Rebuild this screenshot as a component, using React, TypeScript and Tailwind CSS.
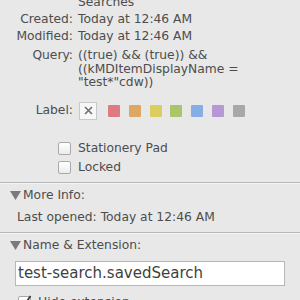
import React from 'react';

const swatches = ['#df7b80', '#dea764', '#dccd5f', '#a8c76b', '#87aee4', '#b898d4', '#a8a8a8'];

function Checkbox({ checked = false }: { checked?: boolean }) {
  return (
    <div className="relative w-[13px] h-[13px] rounded-[2px] border border-[#a9a9a9] bg-gradient-to-b from-white to-[#ececec] shrink-0">
      {checked && (
        <svg className="absolute -left-[1px] -top-[3px]" width="15" height="15" viewBox="0 0 15 15">
          <path d="M3 8 L6 11.5 L12.5 2" fill="none" stroke="#3d3d3d" strokeWidth="1.8" />
        </svg>
      )}
    </div>
  );
}

function Triangle() {
  return (
    <svg width="11" height="9" viewBox="0 0 11 9" className="shrink-0">
      <path d="M0 0 H11 L5.5 9 Z" fill="#7a7a7a" />
    </svg>
  );
}

function Row({ label, children }: { label: string; children: React.ReactNode }) {
  return (
    <div className="flex h-[17px] items-center">
      <div className="w-[73px] text-right">{label}</div>
      <div className="ml-[5px]">{children}</div>
    </div>
  );
}

export default function App() {
  return (
    <div
      className="w-[300px] h-[300px] overflow-hidden bg-[#e8e8e8] text-[#4d4d4d] text-[12.3px] leading-[17px]"
      style={{ fontFamily: '"DejaVu Sans", "Noto Sans", sans-serif' }}
    >
      <div className="mt-[-6px] flex h-[17px] items-center pl-[78px]">Searches</div>
      <Row label="Created:">Today at 12:46 AM</Row>
      <Row label="Modified:">Today at 12:46 AM</Row>
      <div className="mt-[4px] flex leading-[13.5px]">
        <div className="w-[73px] text-right">Query:</div>
        <div className="ml-[5px]">
          <div>((true) &amp;&amp; (true)) &amp;&amp;</div>
          <div>((kMDItemDisplayName =</div>
          <div>"test*"cdw))</div>
        </div>
      </div>
      <div className="mt-[12.5px] flex h-[17px] items-center">
        <div className="w-[73px] text-right">Label:</div>
        <div className="ml-[6px] flex items-center">
          <div className="flex w-[18px] h-[18px] items-center justify-center border border-[#c9c9c9] bg-[#f7f7f7]">
            <svg width="9" height="9" viewBox="0 0 9 9">
              <path d="M1 1 L8 8 M8 1 L1 8" stroke="#6f6f6f" strokeWidth="1.6" />
            </svg>
          </div>
          <div className="ml-[11px] flex gap-[8.8px]">
            {swatches.map((c) => (
              <div key={c} className="w-[12px] h-[12px] rounded-[1px]" style={{ backgroundColor: c }} />
            ))}
          </div>
        </div>
      </div>
      <div className="mt-[20px] flex h-[18px] items-center pl-[58px] gap-[7px]">
        <Checkbox />
        <span>Stationery Pad</span>
      </div>
      <div className="mt-[1px] flex h-[18px] items-center pl-[58px] gap-[7px]">
        <Checkbox />
        <span>Locked</span>
      </div>
      <div className="mt-[6px] h-[1px] bg-[#b8b8b8]" />
      <div className="h-[1px] bg-[#f4f4f4]" />
      <div className="mt-[3px] flex h-[17px] items-center pl-[10px] gap-[2px]">
        <Triangle />
        <span>More Info:</span>
      </div>
      <div className="mt-[5px] h-[17px] pl-[17px]">Last opened: Today at 12:46 AM</div>
      <div className="mt-[6px] h-[1px] bg-[#b8b8b8]" />
      <div className="h-[1px] bg-[#f4f4f4]" />
      <div className="mt-[3px] flex h-[17px] items-center pl-[10px] gap-[2px]">
        <Triangle />
        <span>Name &amp; Extension:</span>
      </div>
      <div className="mx-[15px] mt-[7px] flex h-[25px] items-center border border-[#b7b7b7] bg-white px-[2px] text-[15px] text-[#3f3f3f]">
        test-search.savedSearch
      </div>
      <div className="mt-[7px] flex h-[18px] items-center pl-[18px] gap-[7px]">
        <Checkbox checked />
        <span>Hide extension</span>
      </div>
    </div>
  );
}
